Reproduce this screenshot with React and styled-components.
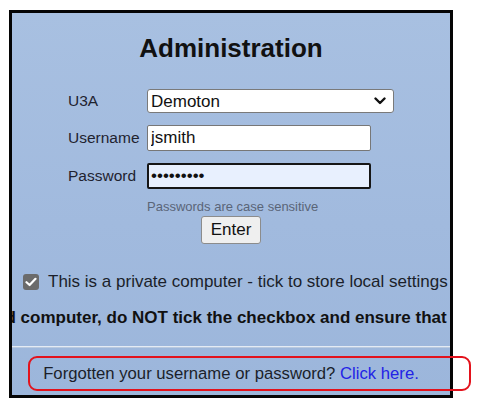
import styled, { createGlobalStyle } from "styled-components"

const GlobalStyle = createGlobalStyle`
    body {
        margin: 0;
        background: #ffffff;
        font-family: "Liberation Sans", Arial, sans-serif;
    }
`

export default function App() {
    return (
        <Page>
            <GlobalStyle />
            <Panel>
                <Title>Administration</Title>

                <Form>
                    <Label>U3A</Label>
                    <SelectWrap>
                        <Select defaultValue="demoton">
                            <option value="demoton">Demoton</option>
                        </Select>
                        <Chevron width="12" height="8" viewBox="0 0 12 8">
                            <path d="M1.5 1.5 L6 6 L10.5 1.5" fill="none" stroke="#111" strokeWidth="2.4" strokeLinecap="round" strokeLinejoin="round" />
                        </Chevron>
                    </SelectWrap>

                    <Label>Username</Label>
                    <TextInput type="text" defaultValue="jsmith" />

                    <Label>Password</Label>
                    <TextInput type="password" defaultValue="123456789" $focused />

                    <Hint>Passwords are case sensitive</Hint>
                </Form>

                <ButtonRow>
                    <EnterButton>Enter</EnterButton>
                </ButtonRow>

                <CheckRow>
                    <Tick>
                        <svg width="12" height="10" viewBox="0 0 12 10">
                            <path d="M1.5 5.2 L4.6 8 L10.5 1.8" fill="none" stroke="#fff" strokeWidth="2.2" strokeLinecap="round" strokeLinejoin="round" />
                        </svg>
                    </Tick>
                    <span>This is a private computer - tick to store local settings</span>
                </CheckRow>

                <Warning>
                    <WarningText $shift={135}>
                        If this is a shared computer, do NOT tick the checkbox and ensure that you log out when you have finished.
                    </WarningText>
                </Warning>

                <Divider />

                <Footer>
                    Forgotten your username or password? <FooterLink href="#">Click here.</FooterLink>
                </Footer>
            </Panel>

            <Highlight />
        </Page>
    )
}

const Page = styled.div`
    position: relative;
    width: 483px;
    height: 407px;
    padding: 10px 0 0 9px;
    box-sizing: border-box;
`

const Panel = styled.div`
    width: 444px;
    height: 388px;
    box-sizing: border-box;
    border: 3px solid #050505;
    background: linear-gradient(180deg, #a8c0e1 0%, #a1bade 55%, #9cb6db 100%);
    overflow: hidden;
    padding-top: 20px;
    color: #1b1f2a;
`

const Title = styled.h1`
    margin: 0;
    text-align: center;
    font-size: 26px;
    line-height: 30px;
    font-weight: bold;
    color: #111;
`

const Form = styled.div`
    display: grid;
    grid-template-columns: 79px auto;
    row-gap: 12px;
    align-items: center;
    justify-items: start;
    margin-top: 26px;
    padding-left: 56px;
`

const Label = styled.span`
    font-size: 15.5px;
    color: #1f2330;
`

const SelectWrap = styled.div`
    position: relative;
    width: 247px;
    height: 24px;
`

const Select = styled.select`
    appearance: none;
    width: 100%;
    height: 100%;
    box-sizing: border-box;
    border: 1px solid #7a7a7a;
    border-radius: 3px;
    background: #fff;
    padding: 0 0 0 3px;
    font-family: "Liberation Sans", Arial, sans-serif;
    font-size: 17px;
    color: #111;
    outline: none;
`

const Chevron = styled.svg`
    position: absolute;
    right: 8px;
    top: 8px;
    pointer-events: none;
`

const TextInput = styled.input`
    width: 224px;
    height: 26px;
    box-sizing: border-box;
    border: ${p => p.$focused ? "2px solid #161616" : "1px solid #777"};
    border-radius: 2px;
    background: ${p => p.$focused ? "#e8f0fe" : "#fff"};
    padding: 0 0 0 ${p => p.$focused ? "2px" : "3px"};
    font-family: "Liberation Sans", Arial, sans-serif;
    font-size: 17px;
    color: #111;
    outline: none;
`

const Hint = styled.span`
    grid-column: 2;
    margin-top: -2px;
    font-size: 13px;
    line-height: 15px;
    color: #5a6578;
`

const ButtonRow = styled.div`
    display: flex;
    justify-content: center;
    margin-top: 2px;
`

const EnterButton = styled.button`
    width: 60px;
    height: 28px;
    padding: 0;
    border: 1px solid #8c8c8c;
    border-radius: 3px;
    background: #efefef;
    font-family: "Liberation Sans", Arial, sans-serif;
    font-size: 17px;
    color: #111;
`

const CheckRow = styled.div`
    display: flex;
    align-items: center;
    gap: 9px;
    margin-top: 28px;
    padding-left: 11px;
    font-size: 17px;
    line-height: 20px;
    white-space: nowrap;
    color: #1b1f2a;
`

const Tick = styled.span`
    display: flex;
    align-items: center;
    justify-content: center;
    width: 16px;
    height: 16px;
    border-radius: 3px;
    background: #6b6b6b;
    flex-shrink: 0;
`

const Warning = styled.div`
    margin-top: 16px;
    overflow: hidden;
    white-space: nowrap;
`

const WarningText = styled.div`
    margin-left: -${p => p.$shift}px;
    font-size: 17px;
    line-height: 20px;
    font-weight: bold;
    color: #111;
`

const Divider = styled.div`
    margin-top: 18px;
    height: 1px;
    background: #e4ebf4;
    border-bottom: 1px solid #b9c9df;
`

const Footer = styled.div`
    margin-top: 16px;
    text-align: center;
    font-size: 16.7px;
    line-height: 20px;
    color: #1b1f2a;
`

const FooterLink = styled.a`
    color: #2323e6;
    text-decoration: none;
`

const Highlight = styled.div`
    position: absolute;
    left: 28px;
    top: 356px;
    width: 443px;
    height: 35px;
    box-sizing: border-box;
    border: 2.5px solid #e3121c;
    border-radius: 9px;
    pointer-events: none;
`
